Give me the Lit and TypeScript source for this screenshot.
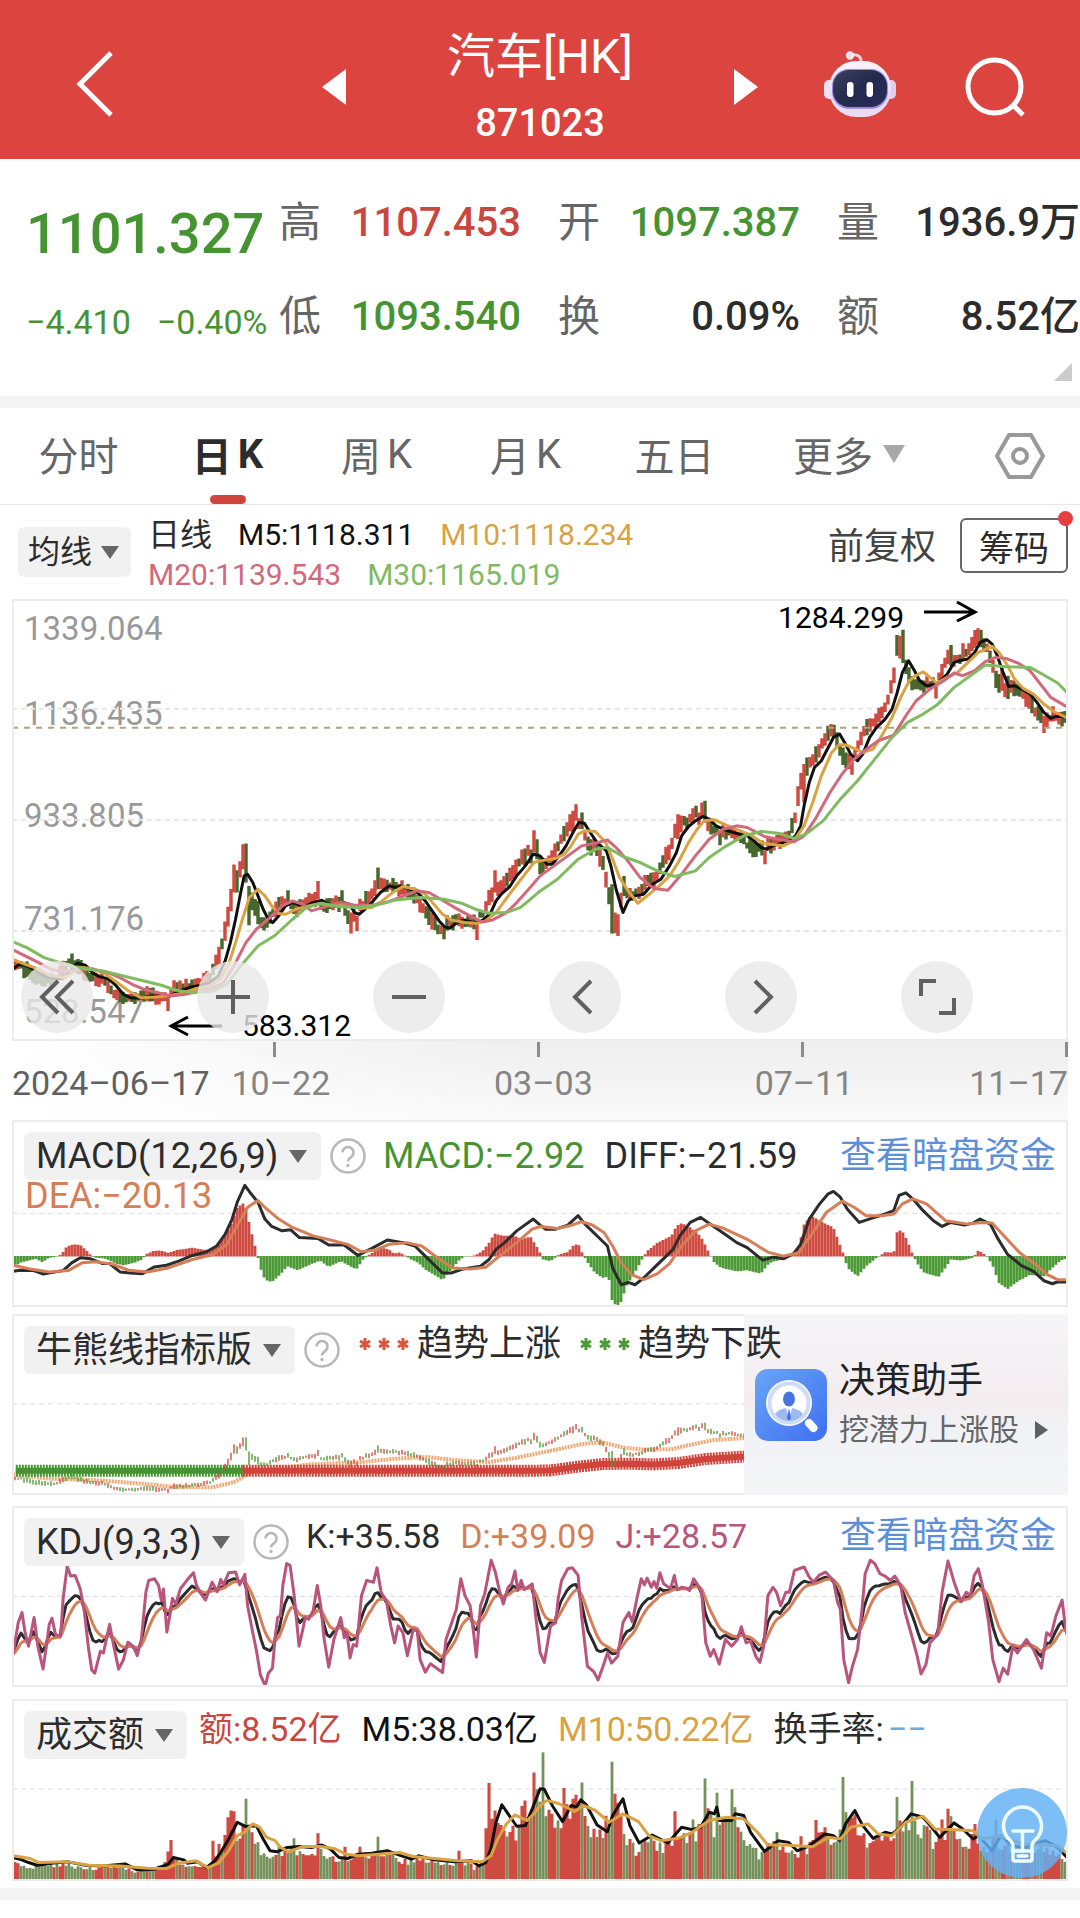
import { LitElement, html, svg, css } from "lit";
import { customElement, state } from "lit/decorators.js";
import { classMap } from "lit/directives/class-map.js";

type Point = [number, number];
type Spike = [number, number, number, "r" | "g"];
type Bar = { x: number; top: number; bottom: number; up: boolean };

/* Chart space: x runs 37..3098 in every chart, one candle every 8.7 units. */
const X0 = 37;
const X1 = 3098;
const SPAN = X1 - X0;
const STEP = SPAN / 352;

const pts = (s: string): Point[] => s.trim().split(/\s+/).map((p) => p.split(",").map(Number) as Point);
/* The right half of each series is stored relative to x = 1568. */
const series = (left: string, right: string): Point[] => [
  ...pts(left),
  ...pts(right).map(([x, y]): Point => [x + 1568, y]),
];
const at = (s: Point[], x: number): number => {
  if (x <= s[0][0]) return s[0][1];
  for (let i = 1; i < s.length; i++) {
    if (x <= s[i][0]) {
      const [ax, ay] = s[i - 1];
      const [bx, by] = s[i];
      return bx === ax ? by : ay + ((by - ay) * (x - ax)) / (bx - ax);
    }
  }
  return s[s.length - 1][1];
};
const noise = (n: number): number => {
  const v = Math.sin(n * 127.1 + 11.7) * 43758.5453;
  return v - Math.floor(v);
};
const path = (s: Point[]): string => "M" + s.map(([x, y]) => `${x.toFixed(1)} ${y.toFixed(1)}`).join("L");
const rects = (bars: Bar[], width: number): string =>
  bars
    .map((b) => `M${(b.x - width / 2).toFixed(1)} ${b.top.toFixed(1)}h${width}V${b.bottom.toFixed(1)}h${-width}z`)
    .join("");

const PRICE_M5 = series(
  `40,1108 60,1095 85,1102 110,1118 135,1132 160,1138 185,1138 205,1115 225,1092 250,1098 270,1120 290,1132 315,1138 335,1155 360,1185 380,1195 410,1197 440,1190 470,1190 495,1190 510,1182 530,1172 560,1162 585,1158 610,1150 635,1130 655,1085 670,1030 685,960 700,880 710,830 720,825 735,850 750,890 765,930 780,960 793,970 810,950 830,920 848,910 865,915 880,925 905,912 935,903 955,915 975,920 1000,910 1015,915 1030,940 1043,945 1060,930 1080,910 1105,880 1130,860 1150,865 1165,860 1190,870 1215,882 1235,905 1255,935 1275,965 1290,982 1305,987 1325,972 1345,963 1370,968 1390,970 1405,960 1425,940 1440,905 1455,885 1480,862 1500,830 1525,800 1548,765`,
  `0,770 20,795 35,795 55,770 75,740 95,700 112,670 128,672 145,700 165,730 192,755 205,800 220,870 240,940 255,905 275,890 300,885 325,855 350,840 375,800 395,760 410,710 430,682 450,665 472,652 490,660 510,680 535,692 560,700 580,705 600,710 620,725 640,745 655,750 675,740 700,732 725,722 740,710 755,680 765,620 780,550 795,505 815,485 835,445 850,415 868,405 885,435 900,465 920,485 935,465 955,415 975,385 1000,360 1020,330 1035,280 1050,220 1068,185 1085,215 1100,245 1120,260 1145,257 1160,245 1180,225 1200,190 1215,185 1240,180 1260,160 1275,130 1295,122 1310,135 1325,170 1340,215 1358,262 1375,260 1395,270 1420,285 1440,310 1460,340 1480,358 1495,352 1510,352 1530,358`
);
const PRICE_M10 = series(
  `40,1080 75,1095 110,1108 145,1128 185,1135 205,1125 235,1105 270,1108 305,1122 340,1148 375,1175 410,1195 450,1193 490,1190 530,1182 570,1168 610,1160 640,1140 665,1095 685,1030 705,960 725,895 750,870 770,890 790,920 810,943 830,945 860,930 890,922 930,913 960,920 990,915 1020,915 1045,928 1080,925 1110,905 1140,880 1170,862 1205,870 1235,885 1260,915 1285,945 1310,962 1350,970 1385,972 1410,965 1440,940 1465,905 1490,870 1520,830 1550,790`,
  `0,785 45,778 70,765 90,740 110,705 130,695 160,697 190,730 210,780 230,835 255,875 283,912 310,890 345,860 375,830 400,790 430,730 455,690 475,665 505,662 540,678 580,695 610,707 645,732 680,737 705,740 735,725 765,680 790,610 815,530 845,460 865,438 885,437 910,448 935,460 965,450 990,410 1020,355 1045,295 1070,245 1085,232 1110,218 1130,235 1150,252 1180,235 1210,220 1240,190 1270,160 1310,142 1330,160 1355,200 1375,240 1400,268 1430,285 1460,315 1490,338 1530,358`
);
const PRICE_M20 = series(
  `40,1052 75,1070 110,1088 150,1110 185,1118 225,1110 270,1110 310,1118 350,1135 385,1155 420,1170 460,1180 500,1190 540,1185 580,1175 620,1165 650,1150 680,1100 715,1030 745,990 785,955 820,920 850,905 880,915 905,935 945,922 990,910 1030,918 1080,918 1120,910 1160,895 1210,875 1245,880 1280,900 1320,925 1365,950 1400,968 1430,962 1470,940 1500,910 1530,875`,
  `0,830 40,800 80,770 120,740 160,732 195,722 220,745 250,780 290,835 330,868 370,873 410,825 450,770 490,720 530,690 570,680 600,685 650,712 700,722 735,728 765,710 800,655 840,580 875,525 910,480 940,455 980,425 1025,408 1060,350 1090,305 1130,270 1170,245 1200,222 1225,230 1260,215 1290,188 1320,175 1350,178 1385,192 1420,215 1450,255 1480,295 1530,325`
);
const PRICE_M30 = series(
  `40,1028 80,1045 130,1075 190,1095 240,1108 300,1115 360,1130 420,1145 470,1158 510,1172 560,1180 620,1175 660,1155 700,1100 750,1040 800,1008 850,960 890,925 935,912 980,922 1040,925 1090,918 1150,902 1220,895 1290,900 1340,912 1380,930 1420,942 1470,940 1510,925 1540,900`,
  `0,875 50,840 110,780 160,750 195,745 240,772 290,790 340,815 390,832 450,815 490,775 540,740 590,710 640,697 690,702 735,718 770,705 820,665 870,600 920,545 970,480 1020,415 1065,370 1110,345 1150,318 1200,265 1250,228 1290,198 1350,203 1420,205 1460,228 1500,252 1530,283`
);
const PRICE_SPIKES: Spike[] = [
  [492, 1188, 1235, "r"], [684, 796, 880, "r"], [693, 813, 880, "g"], [708, 735, 810, "r"], [717, 733, 850, "g"],
  [727, 860, 978, "g"], [748, 905, 975, "g"], [840, 873, 915, "g"], [927, 845, 900, "r"], [990, 873, 912, "g"],
  [1022, 940, 1003, "r"], [1041, 950, 995, "r"], [1060, 875, 915, "g"], [1092, 843, 890, "r"], [1101, 805, 870, "g"],
  [1285, 985, 1020, "g"], [1293, 970, 1018, "r"], [1388, 970, 1022, "r"], [1433, 813, 880, "r"], [1520, 748, 800, "g"],
  [1546, 693, 760, "r"], [1555, 720, 780, "g"], [1660, 635, 700, "r"], [1676, 615, 665, "r"], [1685, 640, 690, "g"],
  [1745, 750, 803, "r"], [1773, 855, 1003, "g"], [1782, 940, 1002, "r"], [1790, 945, 1010, "r"], [1815, 830, 890, "g"],
  [1965, 645, 720, "r"], [2016, 620, 655, "g"], [2034, 610, 652, "r"], [2042, 605, 670, "g"], [2087, 700, 738, "g"],
  [2164, 730, 748, "g"], [2216, 755, 795, "r"], [2331, 495, 610, "r"], [2339, 475, 530, "g"], [2400, 380, 425, "g"],
  [2408, 375, 412, "r"], [2417, 377, 415, "g"], [2470, 475, 527, "r"], [2601, 108, 170, "g"], [2609, 110, 178, "r"],
  [2617, 92, 192, "g"], [2626, 182, 225, "g"], [2713, 250, 298, "r"], [2748, 152, 195, "r"], [2757, 138, 200, "g"],
  [2792, 133, 185, "r"], [2835, 88, 135, "r"], [2844, 92, 145, "g"], [2888, 215, 267, "g"], [2905, 205, 275, "r"],
  [2923, 230, 300, "g"], [2975, 280, 323, "r"], [3027, 350, 402, "r"], [3096, 375, 398, "r"],
];
const MACD_BARS = series(
  `37,508 60,490 85,483 105,478 125,488 145,475 170,470 180,465 195,442 215,435 235,437 250,450 268,470 275,474 310,478 340,493 360,497 390,490 415,480 425,465 445,455 465,453 490,460 515,452 560,445 600,452 625,445 650,415 670,380 690,325 712,310 722,360 735,415 748,465 755,500 770,540 790,547 815,525 835,500 865,512 895,498 930,483 955,502 990,485 1035,510 1055,480 1070,467 1090,455 1110,445 1130,450 1145,463 1160,459 1175,467 1190,478 1215,490 1235,510 1260,525 1285,542 1310,510 1335,480 1350,471 1380,468 1400,455 1420,430 1435,403 1460,410 1490,408 1515,420 1540,412 1560,445`,
  `0,460 8,480 30,485 55,465 80,458 95,440 110,432 122,460 132,480 155,515 180,535 198,530 208,600 222,620 235,605 250,560 280,510 300,470 310,455 340,430 380,410 395,380 410,372 435,385 465,410 490,460 505,490 525,505 570,515 600,512 640,522 665,490 700,480 735,468 750,440 765,375 785,350 815,368 850,385 880,465 890,505 920,530 945,500 975,475 1000,458 1025,460 1035,395 1048,393 1065,425 1080,465 1092,490 1110,518 1155,532 1175,505 1190,480 1220,483 1255,475 1270,453 1285,462 1298,475 1312,500 1330,550 1355,568 1380,548 1420,525 1460,530 1480,510 1510,482 1532,476`
);
const DIFF = series(
  `40,515 60,512 100,513 128,523 160,517 185,513 210,490 235,475 265,478 300,492 320,492 350,517 380,520 415,522 450,502 485,497 520,485 560,468 600,458 630,440 655,405 675,360 690,310 712,260 730,285 750,310 770,360 790,382 820,395 845,392 870,415 925,418 955,437 1000,437 1040,468 1080,447 1125,422 1170,430 1205,440 1240,475 1285,520 1310,520 1345,508 1395,500 1420,480 1440,450 1465,430 1500,395 1548,360`,
  `0,378 15,390 45,390 80,378 110,350 130,375 160,405 195,440 210,505 235,555 255,548 275,555 300,535 330,505 360,475 385,450 405,410 435,370 465,355 500,380 540,408 570,430 600,445 645,482 675,473 705,478 735,462 755,435 780,360 810,315 835,285 850,278 870,295 890,330 925,370 960,358 1000,345 1025,335 1040,290 1060,282 1080,300 1110,335 1140,365 1165,382 1190,370 1230,378 1255,372 1275,360 1305,375 1325,415 1355,465 1395,498 1430,515 1460,543 1485,552 1500,546 1530,547`
);
const DEA = series(
  `40,497 90,508 145,517 200,513 240,490 280,487 325,493 375,512 430,517 490,505 560,480 620,465 660,435 690,380 720,325 750,305 775,330 810,360 850,385 910,410 960,422 1010,435 1050,457 1090,452 1130,435 1180,430 1225,440 1270,475 1315,505 1365,508 1410,503 1450,470 1500,430 1545,390`,
  `0,382 50,388 85,380 120,368 150,377 185,400 210,440 235,490 265,525 300,540 340,522 375,492 410,440 450,395 490,375 530,387 600,420 660,458 705,470 750,460 790,400 830,340 875,307 910,325 945,350 990,350 1025,345 1050,315 1080,300 1120,315 1175,365 1240,375 1280,370 1310,372 1340,405 1390,460 1430,490 1470,525 1500,540 1530,540`
);
const TREND_AVG = series(
  `40,1122 150,1135 300,1140 420,1150 520,1160 620,1160 680,1145 730,1115 800,1105 900,1092 1050,1085 1150,1075 1240,1070 1330,1080 1420,1085 1500,1072`,
  `0,1058 60,1045 120,1032 180,1026 240,1042 300,1048 380,1047 430,1035 500,1020 620,1012 1530,960`
);
const TREND_DOWN: Point[] = pts("48,1111 706,1111");
const TREND_UP = series("706,1111 1540,1111", "30,1110 100,1100 180,1091 260,1090 330,1092 400,1088 480,1076 620,1067 1530,1010");
const J_LINE = series(
  `40,465 55,370 66,340 75,400 85,440 101,355 112,440 127,508 138,430 145,375 153,357 163,405 178,410 185,300 197,203 207,232 220,230 235,270 247,340 258,440 268,510 277,520 293,455 302,460 320,375 330,430 346,508 360,480 373,428 388,440 400,468 412,420 425,280 433,245 450,240 462,260 470,305 476,270 486,398 496,340 502,298 512,315 525,270 545,243 563,222 572,260 585,285 598,303 617,250 632,278 642,242 650,258 665,222 685,220 697,258 712,227 720,320 735,400 745,450 757,525 771,558 780,520 792,505 800,410 807,355 815,350 822,260 833,195 843,200 855,290 869,440 880,390 887,355 897,360 910,335 922,260 932,320 942,420 955,502 970,420 990,355 1000,415 1008,400 1017,475 1026,435 1036,440 1050,290 1065,245 1085,250 1095,207 1107,280 1122,305 1135,380 1146,430 1156,380 1170,400 1183,468 1200,390 1212,395 1220,480 1235,517 1250,492 1285,518 1295,420 1315,360 1325,330 1338,240 1350,290 1365,320 1375,400 1383,472 1395,320 1407,285 1426,185 1438,220 1450,275 1461,315 1475,265 1485,255 1495,217 1503,275 1513,245 1522,272 1545,255 1555,350`,
  `0,460 12,488 20,440 30,380 45,370 52,300 62,245 80,210 93,207 110,230 120,350 137,500 155,515 168,540 182,500 195,460 207,490 225,470 240,370 257,340 267,368 280,300 293,240 302,258 310,238 322,265 330,248 338,268 347,222 358,255 368,262 378,268 389,230 397,272 410,265 425,268 433,275 445,240 458,260 468,280 480,430 493,470 503,450 519,493 537,420 555,440 572,420 583,382 597,430 610,425 625,470 637,488 648,440 660,290 675,265 685,280 697,320 712,280 722,280 737,215 765,205 780,235 792,250 808,230 827,220 850,245 862,310 870,330 880,480 894,548 905,500 920,450 932,340 942,225 957,185 970,195 985,225 1000,232 1015,245 1028,232 1045,260 1058,340 1080,420 1093,470 1104,522 1118,495 1130,430 1152,405 1165,280 1182,187 1200,250 1220,308 1235,280 1247,290 1258,230 1270,210 1282,260 1300,370 1312,480 1330,545 1342,505 1355,523 1370,440 1383,460 1410,420 1430,450 1453,505 1468,400 1480,410 1495,350 1513,303 1522,380 1531,422`
);
const VOL_M5 = series(
  `40,1075 60,1080 85,1090 110,1098 150,1092 200,1088 250,1098 300,1100 365,1094 400,1112 450,1110 490,1095 505,1075 535,1082 545,1092 575,1088 600,1105 625,1085 645,1055 665,1020 690,970 715,983 745,980 765,1020 785,1055 805,1058 835,1045 870,1042 905,1045 935,1038 960,1050 985,1075 1010,1078 1040,1065 1080,1062 1125,1055 1160,1068 1195,1080 1215,1070 1260,1082 1320,1088 1370,1085 1390,1100 1410,1090 1425,1050 1440,970 1457,918 1475,945 1500,982 1525,980 1545,930`,
  `0,870 12,872 35,920 65,968 90,920 105,925 118,903 135,920 165,978 195,998 210,950 240,900 260,980 287,1032 325,1008 370,1032 410,985 440,992 465,985 490,940 505,945 512,925 520,965 555,965 565,945 590,950 610,1000 650,1057 690,1025 720,1030 745,1055 780,1040 825,1005 850,1010 868,1025 885,975 912,935 935,980 965,1018 1000,1000 1020,1005 1045,985 1075,945 1110,955 1135,985 1158,1015 1200,972 1225,990 1255,1020 1270,1010 1310,1055 1335,1010 1370,1040 1400,1045 1465,1025 1500,1045 1530,1078`
);
const VOL_M10 = series(
  `40,1070 90,1078 115,1090 200,1088 260,1098 350,1100 430,1107 485,1108 520,1092 570,1085 605,1105 635,1092 665,1055 690,1010 710,1000 735,975 755,985 775,1015 800,1025 815,1045 840,1058 880,1042 930,1042 970,1048 1005,1065 1040,1070 1100,1065 1160,1060 1200,1072 1260,1078 1330,1085 1400,1088 1425,1070 1445,1020 1470,975 1495,948 1530,965 1550,945`,
  `0,920 20,905 55,915 100,938 125,920 160,935 200,970 240,945 285,968 315,1010 350,1025 400,1018 440,1000 490,965 540,955 590,960 630,1000 660,1038 710,1038 790,1043 835,1015 870,1020 900,985 950,975 980,1005 1020,1010 1060,970 1110,952 1145,990 1190,992 1255,995 1280,1020 1330,1010 1400,1035 1500,1040 1530,1065`
);
const VOL_SPIKES: Spike[] = [
  [492, 1057, 0, "r"], [500, 1023, 0, "r"], [622, 1025, 0, "r"], [640, 1035, 0, "r"], [657, 1008, 0, "r"],
  [666, 955, 0, "r"], [675, 935, 0, "r"], [684, 937, 0, "r"], [718, 900, 0, "g"], [736, 1000, 0, "r"],
  [857, 1018, 0, "g"], [927, 1003, 0, "r"], [1006, 1043, 0, "r"], [1049, 1043, 0, "r"], [1102, 1013, 0, "g"],
  [1329, 1055, 0, "r"], [1415, 988, 0, "r"], [1424, 853, 0, "r"], [1433, 935, 0, "r"], [1441, 905, 0, "g"],
  [1511, 922, 0, "r"], [1528, 905, 0, "r"], [1546, 822, 0, "r"], [1555, 872, 0, "g"], [1573, 762, 0, "g"],
  [1582, 952, 0, "g"], [1641, 868, 0, "r"], [1659, 900, 0, "r"], [1676, 888, 0, "r"], [1685, 852, 0, "g"],
  [1772, 790, 0, "g"], [1781, 885, 0, "r"], [1842, 1070, 0, "r"], [1955, 937, 0, "r"], [2015, 962, 0, "g"],
  [2042, 840, 0, "g"], [2051, 928, 0, "r"], [2077, 882, 0, "g"], [2121, 872, 0, "g"], [2130, 925, 0, "g"],
  [2251, 1000, 0, "g"], [2321, 1012, 0, "r"], [2365, 963, 0, "r"], [2391, 985, 0, "r"], [2443, 835, 0, "g"],
  [2452, 940, 0, "g"], [2480, 948, 0, "r"], [2600, 895, 0, "g"], [2609, 965, 0, "r"], [2643, 847, 0, "g"],
  [2730, 962, 0, "r"], [2748, 930, 0, "r"], [2757, 952, 0, "g"], [2825, 975, 0, "r"], [2887, 962, 0, "g"],
  [3096, 1125, 0, "r"],
];

const GRID: number[] = Array.from({ length: 353 }, (_, i) => X0 + i * STEP);
const spikeAt = (list: Spike[], x: number) => list.find((s) => Math.abs(s[0] - x) <= STEP / 2);

const CANDLES: Bar[] = GRID.map((x, i) => {
  const spike = spikeAt(PRICE_SPIKES, x);
  if (spike) return { x, top: spike[1], bottom: spike[2], up: spike[3] === "r" };
  const lead = at(PRICE_M5, x + 19);
  const slope = lead - at(PRICE_M5, x);
  const mid = lead + slope * 0.25 + (noise(i) - 0.5) * 14;
  const half = 9 + noise(i + 500) * 14 + Math.min(14, Math.abs(slope) * 0.12);
  const up = noise(i * 3 + 7) + (slope < -8 ? 0.3 : slope > 8 ? -0.3 : 0) > 0.5;
  return { x, top: mid - half, bottom: mid + half, up };
});
const SMALL_CANDLES: Bar[] = CANDLES.map((c) => ({
  ...c,
  top: 1012 + (c.top - 735) * 0.336,
  bottom: 1012 + (c.bottom - 735) * 0.336,
}));
const MACD_HIST: Bar[] = GRID.map((x) => {
  const y = at(MACD_BARS, x);
  return { x, top: Math.min(y, 470), bottom: Math.max(y, 471), up: y < 470 };
});
const VOLUME: Bar[] = GRID.map((x, i) => {
  const spike = spikeAt(VOL_SPIKES, x);
  if (spike) return { x, top: spike[1], bottom: 1143, up: spike[3] === "r" };
  const base = 1143 - at(VOL_M5, x + 16);
  return { x, top: 1143 - base * (0.7 + noise(i + 40) * 0.36), bottom: 1143, up: CANDLES[i].up };
});

/* D is the smoothed J, and K sits a third of the way from D to J. */
const [K_LINE, D_LINE] = (() => {
  const k: Point[] = [];
  const d: Point[] = [];
  let prev = 465;
  for (const x of GRID) {
    const j = at(J_LINE, x + 2);
    prev = (prev * 6 + j) / 7;
    d.push([x, prev]);
    k.push([x, (j + 2 * prev) / 3]);
  }
  return [k, d];
})();

const split = (bars: Bar[], width: number) => ({
  up: rects(bars.filter((b) => b.up), width),
  down: rects(bars.filter((b) => !b.up), width),
});
const CANDLE_PATHS = split(CANDLES, 10);
const SMALL_PATHS = split(SMALL_CANDLES, 4);
const MACD_PATHS = split(MACD_HIST, 8);
const VOLUME_PATHS = split(VOLUME, 9);
const VOLUME_EDGES = VOLUME.filter((b) => !b.up).map((b) => `M${b.x.toFixed(1)} ${b.top.toFixed(1)}V${b.bottom}`).join("");

const line = (s: Point[], cls: string) => svg`<path class="line ${cls}" d=${path(s)}></path>`;
const rule = (y: number, cls = "") => svg`<path class="rule ${cls}" d="M${X0} ${y}H${X1}"></path>`;
const plot = (top: number, height: number, body: unknown) => html`
  <svg class="plot" viewBox="${X0} ${top} ${SPAN} ${height}" preserveAspectRatio="none" aria-hidden="true">${body}</svg>
`;
const down = html`<svg class="down" viewBox="0 0 18 13" aria-hidden="true"><path d="M0 0h18L9 13z"></path></svg>`;
const picker = (label: string) => html`
  <span class="picker">
    <select aria-label=${label}><option>${label}</option></select>
    ${down}
  </span>
`;
const help = html`
  <button class="help" aria-label="?">
    <svg viewBox="0 0 36 36" aria-hidden="true">
      <circle cx="18" cy="18" r="16.5"></circle>
      <path d="M12.5 14.5a5.5 5.5 0 1 1 8.6 4.6c-2 1.400-3.100 2.300-3.100 4.400"></path>
      <circle class="dot" cx="18" cy="27.500" r="1.700"></circle>
    </svg>
  </button>
`;

@customElement("app-root")
export class AppRoot extends LitElement {
  @state() private period = "日K";

  static styles = css`
    :host {
      display: block;
      min-height: 100vh;
      background: #fff;
      color: #2c2c2c;
      font-family: Roboto, "Noto Sans CJK SC", sans-serif;
      overflow-x: hidden;
    }
    * { box-sizing: border-box; }
    button, select {
      margin: 0;
      padding: 0;
      border: 0;
      background: none;
      color: inherit;
      font: inherit;
    }
    button { display: grid; place-items: center; }
    a { color: #5d8fd8; text-decoration: none; }
    b { font-weight: inherit; }
    svg { display: block; }

    .top {
      display: grid;
      grid-template-columns: 190fr 100fr 88fr 324fr 88fr 140fr 130fr 20fr;
      background: #dc4440;
      color: #fff;
    }
    .top button { padding-top: 14px; }
    .back { grid-column: 1; }
    .prev { grid-column: 3; }
    .top .back { padding-top: 8px; }
    .back svg { width: 40px; height: 68px; fill: none; stroke: #fff; stroke-width: 5; }
    .step svg { width: 24px; height: 36px; fill: #fff; }
    .robot svg { width: 76px; height: 76px; }
    .search svg { width: 64px; height: 64px; fill: none; stroke: #fff; stroke-width: 5; }
    .name { padding-top: 27px; text-align: center; }
    .name h1 { margin: 0; font-size: 48px; line-height: 60px; font-weight: 400; }
    .name p { margin: 0; font-size: 38px; line-height: 72px; font-weight: 500; }

    .quote {
      display: grid;
      grid-template-columns: 279fr 242fr 37fr 242fr 37fr 243fr;
      grid-template-rows: 94px 94px;
      padding: 17px 0 32px;
      position: relative;
      border-bottom: 12px solid #f4f4f4;
    }
    .price, .change { padding-left: 26px; white-space: nowrap; color: #459431; font-weight: 500; }
    .price { font-size: 56px; line-height: 116px; }
    .change { display: flex; gap: 26px; font-size: 34px; line-height: 104px; font-weight: 400; }
    .field { display: flex; justify-content: space-between; font-size: 40px; line-height: 94px; font-weight: 500; white-space: nowrap; }
    .field span { color: #666; font-weight: 400; font-size: 42px; }
    .field.c2 { grid-column: 4; }
    .field.c3 { grid-column: 6; }
    .rise { color: #c9473f; }
    .fall { color: #459431; }
    .corner { position: absolute; right: 8px; bottom: 15px; width: 18px; height: 18px; fill: #ccc; }

    .tabs {
      display: grid;
      grid-template-columns: repeat(5, 149fr) 200fr 131fr;
      height: 97px;
      padding-left: 4px;
      border-bottom: 1px solid #e6e6e6;
      font-size: 40px;
      color: #666;
    }
    .tab, .more { padding-bottom: 4px; }
    .tab { position: relative; display: flex; align-items: center; justify-content: center; gap: 6px; white-space: nowrap; }
    .tab.on { color: #2c2c2c; font-weight: 700; }
    .tab.on::after {
      content: "";
      position: absolute;
      left: 50%;
      bottom: 0;
      width: 36px;
      height: 9px;
      margin-left: -18px;
      border-radius: 5px;
      background: #d0443b;
    }
    .more { display: flex; align-items: center; justify-content: center; gap: 10px; }
    .more svg { width: 22px; height: 18px; fill: #a8a8a8; }
    .gear { padding-left: 10px; }
    .gear svg { width: 50px; height: 48px; fill: none; stroke: #999; stroke-width: 4; stroke-linejoin: round; }

    .averages { display: flex; align-items: flex-start; padding: 10px 12px 4px 18px; }
    .averages .picker { margin-top: 12px; height: 50px; }
    .averages .picker select { font-size: 32px; padding: 0 38px 0 10px; }
    .legend { flex: 1; margin-left: 17px; font-size: 30px; line-height: 40px; white-space: nowrap; }
    .legend div { display: flex; gap: 26px; }
    .legend .day { font-size: 32px; }
    .m5 { color: #111; }
    .m10 { color: #d9a344; }
    .m20 { color: #d2697a; }
    .m30 { color: #80bb62; }
    .adjust { margin: 7px 24px 0 0; font-size: 36px; line-height: 50px; color: #444; }
    .chips { position: relative; width: 108px; height: 55px; margin-top: 3px; border: 2px solid #666; border-radius: 6px; font-size: 35px; }
    .chips::after { content: ""; position: absolute; right: -7px; top: -9px; width: 15px; height: 15px; border-radius: 50%; background: #e5403f; }

    .charts { padding: 0 12px; }
    .stage { display: grid; position: relative; }
    .stage > * { grid-area: 1 / 1; min-width: 0; }
    .main { height: 442px; }
    .plot { width: 100%; height: 100%; overflow: hidden; outline: 2px solid #ececec; outline-offset: -2px; }
    .plot path { vector-effect: non-scaling-stroke; }
    .line { fill: none; stroke-width: 3; stroke-linejoin: round; }
    .rule { fill: none; stroke: #e6e6e6; stroke-width: 2; stroke-dasharray: 5 4; }
    .rule.last { stroke: #b3a27d; stroke-dasharray: 6 6; }
    .thin .rule { stroke: #dcdcdc; stroke-width: 1; }
    .black { stroke: #111; }
    .ink { stroke: #2c2c2c; }
    .gold { stroke: #d9a344; }
    .pink { stroke: #d2697a; }
    .lime { stroke: #80bb62; }
    .rust { stroke: #d67e57; }
    .plum { stroke: #b9557c; }
    .red { fill: #cf4a40; }
    .dark { fill: #47682c; }
    .green { fill: #4c9a36; }
    .sage { fill: #9db285; }
    .sage-edge { fill: none; stroke: #4d7038; stroke-width: 1; }
    .band { fill: none; stroke-width: 6; }
    .band.comb { stroke-width: 12; stroke-dasharray: 2 1; }
    .band.up { stroke: #d0443b; }
    .band.dn { stroke: #459431; }
    .soft { fill: none; stroke: #eda873; stroke-width: 4; stroke-dasharray: 2 1; }

    .scale { display: grid; grid-template-rows: 85px 102px 103px 93px 40px; padding: 10px 12px 0; font-size: 33px; line-height: 40px; color: #999; }
    .mark { position: absolute; display: flex; font-size: 30px; line-height: 36px; color: #000; }
    .mark svg { width: 54px; height: 22px; fill: none; stroke: #000; stroke-width: 3; }
    .high { right: 90px; top: 1px; gap: 20px; align-items: flex-start; }
    .low { left: 156px; bottom: -3px; gap: 20px; align-items: center; }
    .tools { position: absolute; left: 9px; top: 362px; display: flex; gap: 104px; }
    .tools button { width: 72px; height: 72px; border-radius: 50%; background: rgba(232, 232, 232, 0.8); }
    .tools svg { width: 40px; height: 40px; fill: none; stroke: #606060; stroke-width: 4; }

    .axis { background: linear-gradient(90deg, #fff, #f4f4f4 40%, #f7f7f7); position: relative; }
    .dates {
      display: grid;
      grid-template-columns: 193fr 139fr 147fr 142fr 120fr 142fr 40fr 133fr;
      height: 79px;
      background: linear-gradient(90deg, #fff, rgba(255, 255, 255, 0) 50%), linear-gradient(#eeeeee, #fafafa);
      font-size: 34px;
      line-height: 84px;
      color: #858585;
      white-space: nowrap;
    }
    .dates .from { color: #606060; }
    .dates .d1 { padding-left: 22px; }
    .dates .d2 { grid-column: 4; }
    .dates .d3 { grid-column: 6; }
    .dates .d4 { grid-column: 8; justify-self: end; }
    .ticks { display: flex; justify-content: space-between; position: absolute; left: 261px; right: 0; top: 1px; }
    .ticks i { width: 3px; height: 15px; background: #8c8c8c; }

    .macd { height: 187px; margin-bottom: 7px; }
    .bull { height: 181px; margin-bottom: 11px; }
    .kdj { height: 181px; margin-bottom: 12px; }
    .volume { height: 182px; margin-bottom: 7px; }
    .row { position: relative; display: flex; align-items: flex-start; padding: 12px 12px 0; line-height: 36px; white-space: nowrap; align-self: start; }
    .macd .row, .bull .row { font-size: 36px; }
    .kdj .row, .volume .row { font-size: 34px; }
    .macd .row { line-height: 48px; }
    .row .second { position: absolute; left: 13px; top: 58px; line-height: 36px; }
    .picker { display: inline-grid; align-items: center; height: 48px; border-radius: 6px; background: #f1f1f1; color: #2c2c2c; }
    .picker > * { grid-area: 1 / 1; }
    .picker select { appearance: none; height: 100%; padding: 0 42px 0 12px; font-size: 36px; border-radius: 6px; }
    .down { width: 18px; height: 13px; fill: #666; }
    .picker .down { justify-self: end; margin-right: 14px; pointer-events: none; }
    .averages .picker .down { margin-right: 12px; }
    .help { margin: 6px 0 0 9px; }
    .help svg { width: 36px; height: 36px; fill: none; stroke: #b8b8b8; stroke-width: 2.500; }
    .help .dot { fill: #b8b8b8; stroke: none; }
    .row a { margin-left: auto; font-size: 36px; }
    .v1 { margin-left: 17px; }
    .picker + .v1 { margin-left: 12px; }
    .v2 { margin-left: 20px; }
    .rust-text { color: #d67e57; }
    .plum-text { color: #b9557c; }
    .stars { width: 52px; height: 36px; margin: 0 7px 0 18px; fill: none; stroke: #d9553f; stroke-width: 3; }
    .stars.g { stroke: #4c9a36; }
    .none { color: #6fa8d6; margin-left: 4px; }

    .promo {
      justify-self: end;
      width: 324px;
      display: grid;
      grid-template-columns: 72px 1fr;
      column-gap: 12px;
      align-items: center;
      padding: 0 12px 0 11px;
      background: linear-gradient(#f5f5f7, #f3ecef 50%, #f0f2f6 62%, #f5f5f8);
      color: #222;
    }
    .promo .badge { width: 72px; height: 72px; }
    .promo strong { display: block; font-size: 36px; line-height: 50px; font-weight: 400; }
    .promo small { display: flex; align-items: center; justify-content: space-between; font-size: 30px; line-height: 48px; color: #666; padding-right: 8px; }
    .promo small svg { width: 13px; height: 18px; fill: #606060; }
    .bull .row { z-index: 1; }
    .tip { position: absolute; right: 0; bottom: 2px; }
    .tip svg { width: 92px; height: 92px; }
    .foot { height: 12px; background: #f4f4f4; }
  `;

  private tab(name: string) {
    const label = name.endsWith("K") ? html`<span>${name[0]}</span><span>K</span>` : html`<span>${name}</span>`;
    return html`<button
      role="tab"
      class=${classMap({ tab: true, on: this.period === name })}
      aria-selected=${this.period === name}
      @click=${() => (this.period = name)}
    >${label}</button>`;
  }

  private renderTop() {
    return html`
      <header class="top">
        <button class="back" aria-label="返回"><svg viewBox="0 0 40 68"><path d="M36 3 5 34l31 31"></path></svg></button>
        <button class="step prev" aria-label="上一个"><svg viewBox="0 0 24 36"><path d="M24 0v36L0 18z"></path></svg></button>
        <div class="name"><h1>汽车[HK]</h1><p>871023</p></div>
        <button class="step" aria-label="下一个"><svg viewBox="0 0 24 36"><path d="M0 0v36l24-18z"></path></svg></button>
        <button class="robot" aria-label="助手">
          <svg viewBox="0 0 76 76">
            <defs>
              <linearGradient id="shell" x1="0" y1="0" x2="0" y2="1">
                <stop offset="0" stop-color="#fbf3fb"></stop><stop offset="0.600" stop-color="#e6daf3"></stop>
                <stop offset="1" stop-color="#eadcf2"></stop>
              </linearGradient>
              <linearGradient id="visor" x1="0" y1="0" x2="1" y2="1">
                <stop offset="0" stop-color="#39405f"></stop><stop offset="0.500" stop-color="#242a4d"></stop>
                <stop offset="1" stop-color="#2b2c5c"></stop>
              </linearGradient>
            </defs>
            <path d="M39 14c1-7-4-9-10-8" fill="none" stroke="#f3d3e0" stroke-width="3"></path>
            <circle cx="28" cy="6.500" r="4.200" fill="#f8e0ea"></circle>
            <rect x="2" y="31" width="12" height="19" rx="5" fill="#efdff0"></rect>
            <rect x="62" y="31" width="12" height="19" rx="5" fill="#e3cfec"></rect>
            <rect x="7" y="12" width="62" height="56" rx="27" fill="url(#shell)"></rect>
            <rect x="10" y="20" width="56" height="40" rx="17" fill="#9a8ce2"></rect>
            <rect x="11" y="21" width="54" height="37" rx="16" fill="url(#visor)"></rect>
            <rect x="25" y="33" width="6.500" height="15" rx="3" fill="#fff"></rect>
            <rect x="44.500" y="33" width="6.500" height="15" rx="3" fill="#fff"></rect>
          </svg>
        </button>
        <button class="search" aria-label="搜索">
          <svg viewBox="0 0 64 64"><circle cx="31.500" cy="31.500" r="26.500"></circle><path d="m49 49 11 11"></path></svg>
        </button>
      </header>
    `;
  }

  private renderQuote() {
    return html`
      <section class="quote">
        <div class="price">1101.327</div>
        <div class="field"><span>高</span><b class="rise">1107.453</b></div>
        <div class="field c2"><span>开</span><b class="fall">1097.387</b></div>
        <div class="field c3"><span>量</span><b>1936.9万</b></div>
        <div class="change"><span>−4.410</span><span>−0.40%</span></div>
        <div class="field"><span>低</span><b class="fall">1093.540</b></div>
        <div class="field c2"><span>换</span><b>0.09%</b></div>
        <div class="field c3"><span>额</span><b>8.52亿</b></div>
        <svg class="corner" viewBox="0 0 18 18" aria-hidden="true"><path d="M18 0v18H0z"></path></svg>
      </section>
    `;
  }

  private renderMain() {
    return html`
      <div class="stage main">
        <div class="scale">
          <span>1339.064</span><span>1136.435</span><span>933.805</span><span>731.176</span><span>528.547</span>
        </div>
        ${plot(0, 1325, svg`
          ${rule(329)}${rule(662)}${rule(995)}
          <path class="dark" d=${CANDLE_PATHS.down}></path>
          <path class="red" d=${CANDLE_PATHS.up}></path>
          ${rule(386, "last")}
          ${line(PRICE_M5, "black")}${line(PRICE_M10, "gold")}${line(PRICE_M20, "pink")}${line(PRICE_M30, "lime")}
        `)}
        <div class="mark high">
          <span>1284.299</span>
          <svg viewBox="0 0 54 22"><path d="M0 12h51M33 2l18 10-18 9"></path></svg>
        </div>
        <div class="mark low">
          <svg viewBox="0 0 54 22"><path d="M54 11H3M20 2 3 11l17 9"></path></svg>
          <span>583.312</span>
        </div>
        <div class="tools">
          <button aria-label="最左"><svg viewBox="0 0 40 40"><path d="M21 4 5 20l16 16M36 4 20 20l16 16"></path></svg></button>
          <button aria-label="放大"><svg viewBox="0 0 40 40"><path d="M20 3v34M3 20h34"></path></svg></button>
          <button aria-label="缩小"><svg viewBox="0 0 40 40"><path d="M3 20h34"></path></svg></button>
          <button aria-label="左移"><svg viewBox="0 0 40 40"><path d="M26 4 10 20l16 16"></path></svg></button>
          <button aria-label="右移"><svg viewBox="0 0 40 40"><path d="m14 4 16 16-16 16"></path></svg></button>
          <button aria-label="全屏"><svg viewBox="0 0 40 40"><path d="M4 19V4h15M37 21v15H22"></path></svg></button>
        </div>
      </div>
      <div class="axis">
        <div class="ticks"><i></i><i></i><i></i><i></i></div>
        <div class="dates">
          <span class="from">2024–06–17</span><span class="d1">10–22</span><span class="d2">03–03</span>
          <span class="d3">07–11</span><span class="d4">11–17</span>
        </div>
      </div>
    `;
  }

  private renderMacd() {
    return html`
      <section class="stage macd thin">
        ${plot(66, 555, svg`
          ${rule(343)}
          <path class="red" d=${MACD_PATHS.up}></path>
          <path class="green" d=${MACD_PATHS.down}></path>
          ${line(DIFF, "ink")}${line(DEA, "rust")}
        `)}
        <div class="row">
          ${picker("MACD(12,26,9)")}${help}
          <span class="v1 fall">MACD:−2.92</span>
          <span class="v2">DIFF:−21.59</span>
          <span class="second rust-text">DEA:−20.13</span>
          <a href="#funds">查看暗盘资金</a>
        </div>
      </section>
    `;
  }

  private renderBull() {
    const stars = (cls: string) => html`
      <svg class="stars ${cls}" viewBox="0 0 52 36" aria-hidden="true">
        ${[7, 26, 45].map((x) => svg`<path d="M${x} 12v12M${x - 5} 15l10 6M${x + 5} 15l-10 6"></path>`)}
      </svg>
    `;
    return html`
      <section class="stage bull thin">
        ${plot(645, 538, svg`
          ${rule(912)}
          <path class="soft" d=${path(TREND_AVG)}></path>
          <path class="band dn" d=${path(TREND_DOWN)}></path>
          <path class="band dn comb" d=${path(TREND_DOWN)}></path>
          <path class="band up" d=${path(TREND_UP)}></path>
          <path class="band up comb" d=${path(TREND_UP)}></path>
          <path class="green" d=${SMALL_PATHS.down}></path>
          <path class="red" d=${SMALL_PATHS.up}></path>
        `)}
        <a class="promo" href="#assistant">
          <svg class="badge" viewBox="0 0 72 72" aria-hidden="true">
            <defs>
              <linearGradient id="sky" x1="0" y1="0" x2="1" y2="1">
                <stop offset="0" stop-color="#69a5f7"></stop><stop offset="1" stop-color="#3f6ff0"></stop>
              </linearGradient>
            </defs>
            <rect width="72" height="72" rx="13" fill="url(#sky)"></rect>
            <path d="m54 54 4.500 5" stroke="#fff" stroke-width="8" stroke-linecap="round"></path>
            <circle cx="34" cy="34" r="23" fill="#fff"></circle>
            <circle cx="34" cy="34" r="19.500" fill="#fff" stroke="#cfdcf8" stroke-width="4"></circle>
            <path d="M20 45c3-4 7-5 11-6l3 11 3-11c4 1 8 2 11 6-4 5-9 7-14 7s-10-2-14-7z" fill="#9db9ee"></path>
            <path d="m34 39 2 10-2 3-2-3z" fill="#3f6ff0"></path>
            <ellipse cx="34" cy="30" rx="6" ry="7.500" fill="#4a74dd"></ellipse>
          </svg>
          <span>
            <strong>决策助手</strong>
            <small>挖潜力上涨股<svg viewBox="0 0 13 18" aria-hidden="true"><path d="M0 0v18l13-9z"></path></svg></small>
          </span>
        </a>
        <div class="row">
          ${picker("牛熊线指标版")}${help}
          ${stars("")}<span>趋势上涨</span>${stars("g")}<span>趋势下跌</span>
        </div>
      </section>
    `;
  }

  private renderKdj() {
    return html`
      <section class="stage kdj thin">
        ${plot(24, 537, svg`${rule(292)}${line(K_LINE, "ink")}${line(D_LINE, "rust")}${line(J_LINE, "plum")}`)}
        <div class="row">
          ${picker("KDJ(9,3,3)")}${help}
          <span class="v1">K:+35.58</span>
          <span class="v2 rust-text">D:+39.09</span>
          <span class="v2 plum-text">J:+28.57</span>
          <a href="#funds">查看暗盘资金</a>
        </div>
      </section>
    `;
  }

  private renderVolume() {
    return html`
      <section class="stage volume thin">
        ${plot(603, 542, svg`
          ${rule(871)}
          <path class="sage" d=${VOLUME_PATHS.down}></path>
          <path class="sage-edge" d=${VOLUME_EDGES}></path>
          <path class="red" d=${VOLUME_PATHS.up}></path>
          ${line(VOL_M5, "black")}${line(VOL_M10, "gold")}
        `)}
        <div class="row">
          ${picker("成交额")}
          <span class="v1 rise">额:8.52亿</span>
          <span class="v2 m5">M5:38.03亿</span>
          <span class="v2 m10">M10:50.22亿</span>
          <span class="v2">换手率:</span><span class="none">−−</span>
        </div>
        <button class="tip" aria-label="提示">
          <svg viewBox="0 0 92 92">
            <circle cx="46" cy="46" r="45" fill="#64b1f5" fill-opacity="0.830"></circle>
            <g fill="none" stroke="#eefcff" stroke-width="3.500" stroke-linecap="round" stroke-linejoin="round">
              <path d="M37 64v-5c0-4-3-6-6-9a19 19 0 1 1 31 0c-3 3-6 5-6 9v5"></path>
              <path d="M37 64h19v8a2 2 0 0 1-2 2H39a2 2 0 0 1-2-2zM37 44h20M46.500 44v20M42 69h9"></path>
            </g>
          </svg>
        </button>
      </section>
    `;
  }

  render() {
    return html`
      ${this.renderTop()}
      <main>
        ${this.renderQuote()}
        <nav class="tabs" role="tablist">
          ${["分时", "日K", "周K", "月K", "五日"].map((n) => this.tab(n))}
          <button class="more">更多<svg viewBox="0 0 22 18" aria-hidden="true"><path d="M0 0h22L11 18z"></path></svg></button>
          <button class="gear" aria-label="设置">
            <svg viewBox="0 0 50 48"><path d="M14 3h22l12 21-12 21H14L2 24z"></path><circle cx="25" cy="24" r="7"></circle></svg>
          </button>
        </nav>
        <div class="averages">
          ${picker("均线")}
          <div class="legend">
            <div><span class="day">日线</span><span class="m5">M5:1118.311</span><span class="m10">M10:1118.234</span></div>
            <div><span class="m20">M20:1139.543</span><span class="m30">M30:1165.019</span></div>
          </div>
          <button class="adjust">前复权</button>
          <button class="chips">筹码</button>
        </div>
        <div class="charts">
          ${this.renderMain()}${this.renderMacd()}${this.renderBull()}${this.renderKdj()}${this.renderVolume()}
        </div>
        <div class="foot"></div>
      </main>
    `;
  }
}
